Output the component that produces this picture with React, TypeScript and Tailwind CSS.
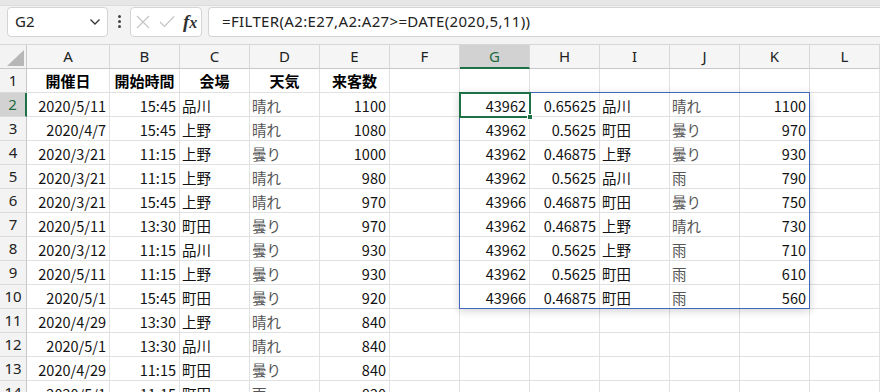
import React from "react"

const cols = ["A", "B", "C", "D", "E", "F", "G", "H", "I", "J", "K", "L"]

type Row = (string | null)[]

const left: Row[] = [
  ["2020/5/11", "15:45", "品川", "晴れ", "1100"],
  ["2020/4/7", "15:45", "上野", "晴れ", "1080"],
  ["2020/3/21", "11:15", "上野", "曇り", "1000"],
  ["2020/3/21", "11:15", "上野", "晴れ", "980"],
  ["2020/3/21", "15:45", "上野", "晴れ", "970"],
  ["2020/5/11", "13:30", "町田", "曇り", "970"],
  ["2020/3/12", "11:15", "品川", "曇り", "930"],
  ["2020/5/11", "11:15", "上野", "曇り", "930"],
  ["2020/5/1", "15:45", "町田", "曇り", "920"],
  ["2020/4/29", "13:30", "上野", "晴れ", "840"],
  ["2020/5/1", "13:30", "品川", "晴れ", "840"],
  ["2020/4/29", "11:15", "町田", "曇り", "840"],
  ["2020/5/1", "11:15", "町田", "雨", "820"],
]

const spill: Row[] = [
  ["43962", "0.65625", "品川", "晴れ", "1100"],
  ["43962", "0.5625", "町田", "曇り", "970"],
  ["43962", "0.46875", "上野", "曇り", "930"],
  ["43962", "0.5625", "品川", "雨", "790"],
  ["43966", "0.46875", "町田", "曇り", "750"],
  ["43962", "0.46875", "上野", "晴れ", "730"],
  ["43962", "0.5625", "上野", "雨", "710"],
  ["43962", "0.5625", "町田", "雨", "610"],
  ["43966", "0.46875", "町田", "雨", "560"],
]

// alignment per 5-column block: num, num, text, text(grey), num
const kind = ["num", "num", "text", "weather", "num"]

const Cell = ({ value, k }: { value: string | null; k?: string }) => {
  if (!value) return <div className="border-r border-b border-[#e1e1e1]" />
  const isNum = k === "num"
  return (
    <div
      className={
        "border-r border-b border-[#e1e1e1] flex items-center whitespace-nowrap overflow-hidden text-[14.5px] pt-[2px] " +
        (isNum ? "justify-end pr-[3px] text-[#111]" : "justify-start pl-[2px] ") +
        (k === "weather" ? "text-[#555]" : k === "text" ? "text-[#111]" : "")
      }
    >
      {value}
    </div>
  )
}

export default function App() {
  const headers = ["開催日", "開始時間", "会場", "天気", "来客数"]

  const rows: Row[] = []
  for (let r = 0; r < 13; r++) {
    const s = r < spill.length ? spill[r] : [null, null, null, null, null]
    rows.push([...left[r], null, ...s, null])
  }

  return (
    <div className="w-[880px] h-[392px] overflow-hidden bg-white relative font-['Noto_Sans_CJK_JP',sans-serif] text-black">
      {/* formula bar */}
      <div className="h-[45px] bg-[#f3f3f3] border-b border-[#d6d6d6] flex flex-col">
        <div className="h-[6px] bg-[#e6e6e6] border-b border-[#dcdcdc]" />
        <div className="flex items-center h-[31px] pl-[7px] gap-0">
          <div className="w-[101px] h-[30px] bg-white border border-[#d4d4d4] rounded-[4px] flex items-center justify-between pl-[7px] pr-[6px]">
            <span className="font-['Noto_Sans',sans-serif] text-[15px] text-[#222]">G2</span>
            <svg width="12" height="8" viewBox="0 0 12 8">
              <polyline points="1.5,1.5 6,6 10.5,1.5" fill="none" stroke="#333" strokeWidth="1.3" />
            </svg>
          </div>
          <div className="w-[22px] flex flex-col items-center gap-[2px]">
            <div className="w-[3px] h-[3px] bg-[#444] rounded-full" />
            <div className="w-[3px] h-[3px] bg-[#444] rounded-full" />
            <div className="w-[3px] h-[3px] bg-[#444] rounded-full" />
          </div>
          <div className="w-[72px] h-[30px] bg-white border border-[#d4d4d4] rounded-[4px] flex items-center pl-[5px] gap-[9px]">
            <svg width="14" height="14" viewBox="0 0 14 14">
              <path d="M1 1 L13 13 M13 1 L1 13" stroke="#c4c4c4" strokeWidth="1.2" />
            </svg>
            <svg width="16" height="13" viewBox="0 0 16 13">
              <polyline points="1,7 5.5,11.5 15,1.5" fill="none" stroke="#c4c4c4" strokeWidth="1.2" />
            </svg>
            <span className="font-['Liberation_Serif',serif] italic font-bold text-[19px] text-[#333] leading-none -ml-[1px]">
              f<span className="text-[16px]">x</span>
            </span>
          </div>
          <div className="ml-[6px] flex-1 h-[30px] bg-white border border-[#d4d4d4] rounded-l-[4px] border-r-0 flex items-center pl-[13px]">
            <span className="font-['Noto_Sans',sans-serif] text-[15px] text-[#222] tracking-[0.35px]">
              =FILTER(A2:E27,A2:A27&gt;=DATE(2020,5,11))
            </span>
          </div>
        </div>
      </div>

      {/* sheet */}
      <div className="relative">
        <div className="grid grid-cols-[27px_83px_repeat(11,70px)] auto-rows-[24px]">
          {/* corner */}
          <div className="bg-[#f3f3f3] border-r border-b border-[#c8c8c8] relative">
            <svg className="absolute left-[7px] top-[5px]" width="17" height="16" viewBox="0 0 17 16">
              <polygon points="17,0 17,16 0,16" fill="#b7b7b7" />
            </svg>
          </div>
          {cols.map((c) => (
            <div
              key={c}
              className={
                "flex items-center justify-center text-[15px] font-['Noto_Sans',sans-serif] border-r border-[#d8d8d8] " +
                (c === "G"
                  ? "bg-[#d2d2d2] text-[#1e6b41] border-b-2 border-b-[#1e7145]"
                  : "bg-[#f5f5f5] text-[#222] border-b border-b-[#c8c8c8]")
              }
            >
              {c}
            </div>
          ))}

          {/* row 1 */}
          <div className="bg-[#f3f3f3] border-r border-b border-[#c8c8c8] border-b-[#dadada] flex items-center justify-center text-[15px] font-['Noto_Sans',sans-serif] text-[#222]">
            1
          </div>
          {headers.map((h) => (
            <div
              key={h}
              className="border-r border-b border-[#e1e1e1] flex items-center justify-center font-bold text-[15px] pt-[2px]"
            >
              {h}
            </div>
          ))}
          {Array.from({ length: 7 }).map((_, i) => (
            <div key={i} className="border-r border-b border-[#e1e1e1]" />
          ))}

          {rows.map((row, r) => (
            <React.Fragment key={r}>
              <div
                className={
                  "border-b border-[#dadada] flex items-center justify-center text-[15px] font-['Noto_Sans',sans-serif] " +
                  (r === 0
                    ? "bg-[#d2d2d2] text-[#1e6b41] border-r-2 border-r-[#1e7145]"
                    : "bg-[#f3f3f3] text-[#222] border-r border-r-[#c8c8c8]")
                }
              >
                {r + 2}
              </div>
              {row.map((v, c) => (
                <Cell key={c} value={v} k={c < 5 ? kind[c] : c > 5 && c < 11 ? kind[c - 6] : undefined} />
              ))}
            </React.Fragment>
          ))}
        </div>

        {/* spill range border */}
        <div className="absolute left-[459px] top-[47px] w-[351px] h-[217px] border border-[#3f68b8] shadow-[0_2px_8px_rgba(0,0,0,0.18)] pointer-events-none" />
        {/* active cell */}
        <div className="absolute left-[459px] top-[47px] w-[72px] h-[26px] border-2 border-[#1e7145] pointer-events-none">
          <div className="absolute -right-[4px] -bottom-[4px] w-[6px] h-[6px] bg-[#1e7145] border border-white" />
        </div>
      </div>
    </div>
  )
}
